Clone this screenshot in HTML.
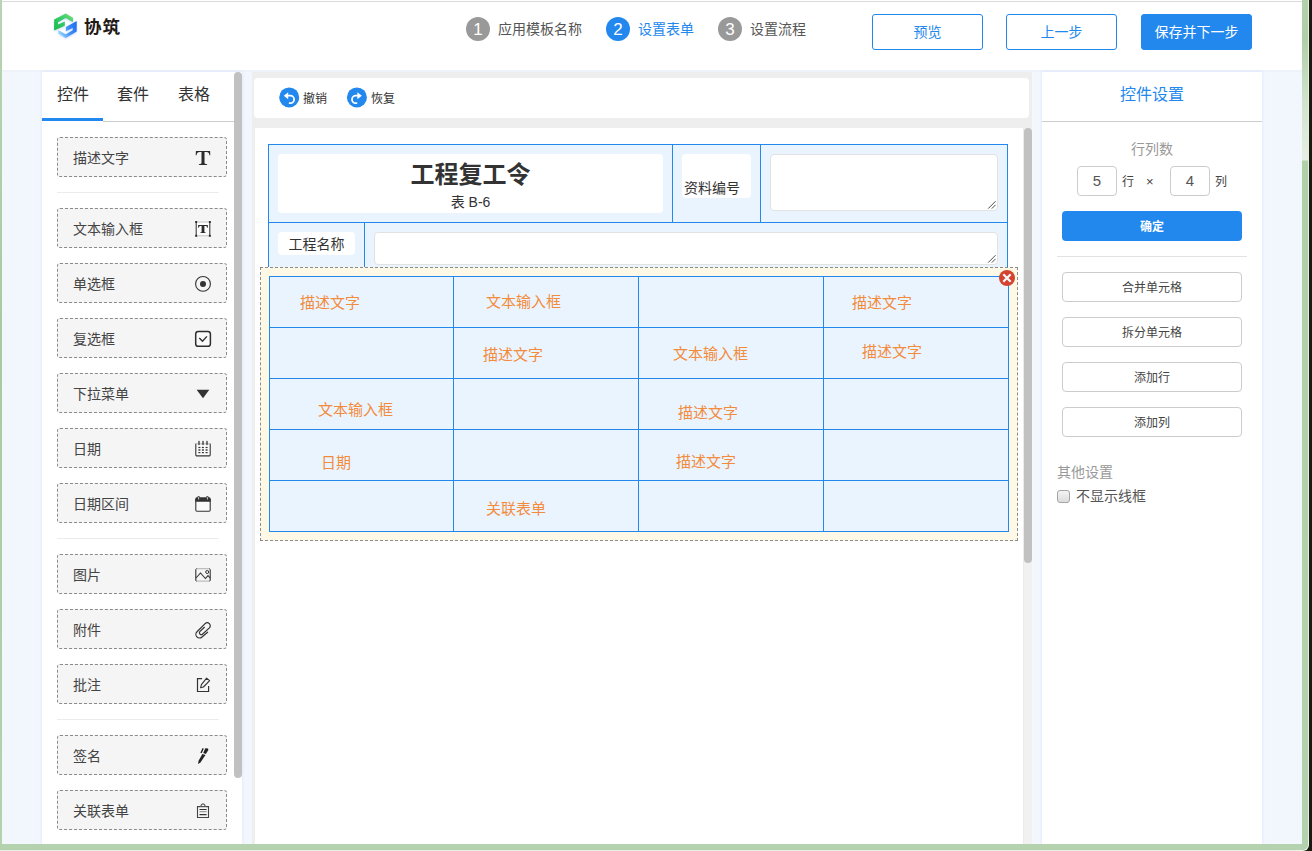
<!DOCTYPE html>
<html lang="zh-CN">
<head>
<meta charset="utf-8">
<title>设置表单</title>
<style>
*{box-sizing:border-box;margin:0;padding:0}
html,body{width:1312px;height:851px;overflow:hidden;background:#f2f6fd;}
body{position:relative;font-family:"Liberation Sans","Noto Sans CJK SC",sans-serif;font-size:14px;color:#555;}
.abs{position:absolute}
/* window frame */
#frameL{left:0;top:0;width:2px;height:851px;background:linear-gradient(#b9d4b3,#a9c9a2 40%,#b4d2ae)}
#frameB{left:0;top:844px;width:1297px;height:7px;background:linear-gradient(#b3d2ad,#b3d2ad 5.6px,#dfeadc 6.2px,#f4f7f3)}
#frameR{left:1302px;top:0;width:6px;height:839px;background:linear-gradient(#b3d0ac 0,#b0cfa9 40px,#cfe2cb 100px,#e6efe4 160px,#b0d0a9 161px,#b3d2ad 839px)}
#frameR2{left:1308px;top:0;width:1px;height:839px;background:#e6eee3}
#frameD{left:1302px;top:0;width:10px;height:851px;background:#1b1a10}
#frameCw{left:1296px;top:838px;width:13px;height:13px;background:#eef3ec;border-bottom-right-radius:6px}
#frameCg{left:1296px;top:838px;width:12px;height:12px;background:#b3d2ad;border-bottom-right-radius:5px}
#frameCi{left:1296px;top:838px;width:6px;height:6px;background:#f2f6fd}
/* header */
#hdr{left:2px;top:0;width:1300px;height:70px;background:#fff}
#hline{left:2px;top:1px;width:1300px;height:1px;background:#dadade}
#hshade{left:2px;top:70px;width:1300px;height:2px;background:#edf2fb}
.logotxt{left:84px;top:13.5px;font-size:17.5px;font-weight:bold;color:#231815;line-height:26px;letter-spacing:1px}
.stepc{width:24px;height:24px;border-radius:12px;background:#999;color:#fff;top:17px;text-align:center;font:17px/26px "Liberation Sans",sans-serif}
.stepc.on{background:#2288ee}
.stept{top:19px;line-height:20px;font-size:14px;color:#555;white-space:nowrap}
.stept.on{color:#2288ee}
.hbtn{top:14px;width:111px;height:36px;border:1px solid #2288ee;border-radius:3px;color:#2288ee;background:#fff;text-align:center;line-height:34px;font-size:14px}
.hbtn.fill{background:#2288ee;color:#fff}
/* left panel */
#lp{left:42px;top:72px;width:200px;height:772px;background:#fff;box-shadow:0 0 3px rgba(90,110,220,.14)}
#lscroll{left:234px;top:72px;width:8px;height:706px;background:#c1c1c1;border-radius:4px}
.tab{top:84px;font-size:16px;line-height:22px;color:#333;white-space:nowrap}
#tabul{left:42px;top:118px;width:61px;height:3px;background:#2288ee}
#tabline{left:103px;top:121px;width:131px;height:1px;background:#ccc}
.it{left:57px;width:170px;height:40px;border:1px dashed #8a8a8a;border-radius:3px;background:#f5f5f5}
.it>span{position:absolute;left:15px;top:10px;line-height:20px;font-size:14px;color:#444;white-space:nowrap}
.it svg{position:absolute;left:137px;top:11px;width:18px;height:18px;overflow:visible}
.sep{left:57px;width:162px;height:1px;background:#ececec}
/* center */
#cbg{left:252px;top:72px;width:780px;height:772px;background:#eee}
#tb{left:254px;top:78px;width:775px;height:40px;background:#fff;border-radius:4px}
#cv{left:255px;top:128px;width:769px;height:716px;background:#fff}
#ctrack{left:1023px;top:128px;width:9px;height:716px;background:#f1f1f1;border-left:1px solid #ebebeb}
#cthumb{left:1024px;top:128px;width:8px;height:435px;background:#c1c1c1;border-radius:4px}
.tbt{top:89px;line-height:20px;font-size:12px;color:#333;white-space:nowrap}
/* right panel */
#rp{left:1042px;top:72px;width:220px;height:772px;background:#fff;box-shadow:0 0 3px rgba(90,110,220,.14)}
</style>
</head>
<body>
<!-- header -->
<div class="abs" id="hdr"></div>
<div class="abs" id="hline"></div>
<div class="abs" id="hshade"></div>
<svg class="abs" style="left:52px;top:12px;filter:drop-shadow(0 1px 1.2px rgba(110,150,255,.35))" width="27" height="28" viewBox="0 0 27 28">
<defs>
<linearGradient id="lg1" x1="0" y1="1" x2="1" y2="0"><stop offset="0" stop-color="#14b84a"/><stop offset="0.6" stop-color="#3ccf6a"/><stop offset="1" stop-color="#7fdc78"/></linearGradient>
<linearGradient id="lg2" x1="0" y1="0.6" x2="1" y2="0.2"><stop offset="0" stop-color="#8fd3fb"/><stop offset="0.55" stop-color="#3b8cf6"/><stop offset="1" stop-color="#1f6ef2"/></linearGradient>
</defs>
<path d="M2.1 18.6 L2.1 7.6 L13.7 1.5 L21 5.8 L21 10.3 L13.7 6 L6 10.3 L6 12.5 L12.8 9.4 L12.8 13.7 Z" fill="url(#lg1)"/>
<path d="M24.7 9.1 L24.7 19.5 L13.7 25.9 L6.4 21.6 L6.4 18.3 L13.7 22.2 L20.7 18.3 L20.7 16 L13.9 19.2 L13.9 14.9 Z" fill="url(#lg2)"/>
</svg>
<div class="abs logotxt"><span class="cj">协筑</span></div>

<div class="abs stepc" style="left:466px">1</div>
<div class="abs stept" style="left:498px"><span class="cj">应用模板名称</span></div>
<div class="abs stepc on" style="left:606px">2</div>
<div class="abs stept on" style="left:638px"><span class="cj">设置表单</span></div>
<div class="abs stepc" style="left:718px">3</div>
<div class="abs stept" style="left:750px"><span class="cj">设置流程</span></div>

<div class="abs hbtn" style="left:872px"><span class="cj">预览</span></div>
<div class="abs hbtn" style="left:1006px"><span class="cj">上一步</span></div>
<div class="abs hbtn fill" style="left:1141px"><span class="cj">保存并下一步</span></div>

<!-- left panel -->
<div class="abs" id="lp"></div>
<div class="abs tab" style="left:57px"><span class="cj">控件</span></div>
<div class="abs tab" style="left:117px"><span class="cj">套件</span></div>
<div class="abs tab" style="left:178px"><span class="cj">表格</span></div>
<div class="abs" id="tabul"></div>
<div class="abs" id="tabline"></div>
<div class="abs" id="lscroll"></div>
<!--ITEMS_START-->
<div class="abs it" style="top:137px"><span><span class="cj">描述文字</span></span><svg viewBox="0 0 18 18"><path fill="#2b2b2b" d="M0.9 1.9H15.1L15.3 6.2H14.5C14.1 4 13.4 3.1 11.4 3.1H9.5V13.6C9.5 14.8 10 15.1 12.1 15.2V16H3.9V15.2C6 15.1 6.5 14.8 6.5 13.6V3.1H4.6C2.6 3.1 1.9 4 1.5 6.2H0.7Z"/></svg></div>
<div class="abs sep" style="top:192px"></div>
<div class="abs it" style="top:208px"><span><span class="cj">文本输入框</span></span><svg viewBox="0 0 18 18"><rect x="1.2" y="2" width="13.6" height="13.8" fill="#fcfcfc"/><g fill="#2b2b2b"><rect x="0.2" y="1" width="2" height="2"/><rect x="13.8" y="1" width="2" height="2"/><rect x="0.2" y="14.8" width="2" height="2"/><rect x="13.8" y="14.8" width="2" height="2"/><rect x="0.7" y="2" width="1" height="14"/><rect x="14.3" y="2" width="1" height="14"/><rect x="2" y="1.5" width="12" height="1" fill="#c4c4c4"/><rect x="2" y="15.3" width="12" height="1" fill="#c4c4c4"/><path d="M3.2 5H12.8L12.9 7.8H12.2C12 6.5 11.5 6 10.3 6H9.4V11.4C9.4 12.1 9.7 12.3 10.8 12.4V13H5.2V12.4C6.3 12.3 6.6 12.1 6.6 11.4V6H5.7C4.5 6 4 6.5 3.8 7.8H3.1Z"/></g></svg></div>
<div class="abs it" style="top:263px"><span><span class="cj">单选框</span></span><svg viewBox="0 0 18 18"><circle cx="8" cy="8.9" r="7.4" fill="none" stroke="#333" stroke-width="1.1"/><circle cx="8" cy="8.9" r="3" fill="#333"/></svg></div>
<div class="abs it" style="top:318px"><span><span class="cj">复选框</span></span><svg viewBox="0 0 18 18"><rect x="0.7" y="1.4" width="14.7" height="14.9" rx="2.6" fill="#fafafa" stroke="#2e2e2e" stroke-width="1.5"/><path d="M4.3 8L7.5 11.2L11.9 6.4" fill="none" stroke="#2e2e2e" stroke-width="1.4"/></svg></div>
<div class="abs it" style="top:373px"><span><span class="cj">下拉菜单</span></span><svg viewBox="0 0 18 18"><path d="M1.6 4.8H14.3L8 13.2Z" fill="#333"/></svg></div>
<div class="abs it" style="top:428px"><span><span class="cj">日期</span></span><svg viewBox="0 0 18 18"><path d="M0.8 3.6V14.7A1.2 1.2 0 0 0 2 15.9H14A1.2 1.2 0 0 0 15.2 14.7V3.6" fill="#fbfbfb" stroke="#333" stroke-width="1.1"/><path d="M0.8 3.8H15.2" stroke="#bdbdbd" stroke-width="1.2"/><g stroke="#333" stroke-width="1.3" stroke-linecap="round"><path d="M4 1.4V4.6M8 1.4V4.6M12 1.4V4.6"/></g><g fill="#333"><rect x="3.4" y="6.9" width="2" height="1.2"/><rect x="6.9" y="6.9" width="2" height="1.2"/><rect x="10.6" y="6.9" width="2" height="1.2"/><rect x="3.4" y="9.3" width="2" height="1.4"/><rect x="6.9" y="9.3" width="2" height="1.4"/><rect x="10.6" y="9.3" width="2" height="1.4"/><rect x="3.4" y="12" width="2" height="1.2"/><rect x="6.9" y="12" width="2" height="1.2"/><rect x="10.6" y="12" width="2" height="1.2"/></g></svg></div>
<div class="abs it" style="top:483px"><span><span class="cj">日期区间</span></span><svg viewBox="0 0 18 18"><path d="M0.8 4V15A1.2 1.2 0 0 0 2 16.2H14A1.2 1.2 0 0 0 15.2 15V4" fill="#fbfbfb" stroke="#333" stroke-width="1.1"/><path d="M0.3 6.8V3.8A1.6 1.6 0 0 1 1.9 2.2H14.1A1.6 1.6 0 0 1 15.7 3.8V6.8Z" fill="#333"/><g stroke="#333" stroke-width="2.4" stroke-linecap="round"><path d="M3.6 2.3V4M12.4 2.3V4"/></g><g stroke="#e8e8e8" stroke-width="0.8" stroke-linecap="round"><path d="M3.6 2.2V4.2M12.4 2.2V4.2"/></g></svg></div>
<div class="abs sep" style="top:538px"></div>
<div class="abs it" style="top:554px"><span><span class="cj">图片</span></span><svg viewBox="0 0 18 18"><path d="M0.8 3.4V14.4M15.2 3.4V14.4" stroke="#333" stroke-width="1.1" fill="none"/><path d="M1.6 2.7H14.4M1.6 15.1H14.4" stroke="#bdbdbd" stroke-width="1.2" stroke-linecap="round"/><path d="M0.8 3.6Q0.8 2.7 1.7 2.7M15.2 3.6Q15.2 2.7 14.3 2.7M0.8 14.2Q0.8 15.1 1.7 15.1M15.2 14.2Q15.2 15.1 14.3 15.1" fill="none" stroke="#555" stroke-width="1"/><path d="M1 12L5.5 7L10.4 12.5L13 9.6L15.2 12" fill="none" stroke="#333" stroke-width="1.1"/><circle cx="12.2" cy="6" r="1.5" fill="none" stroke="#333" stroke-width="1"/></svg></div>
<div class="abs it" style="top:609px"><span><span class="cj">附件</span></span><svg viewBox="0 0 18 18"><path d="M12.6 11.2L7 16A3.6 3.6 0 0 1 2 10.8L10.1 2.7A3 3 0 0 1 14.4 6.9L7.4 13.3A1.9 1.9 0 0 1 4.8 10.6L9.4 6.3" fill="none" stroke="#333" stroke-width="1.2" stroke-linecap="round"/></svg></div>
<div class="abs it" style="top:664px"><span><span class="cj">批注</span></span><svg viewBox="0 0 18 18"><path d="M7.1 2.6H2.5V15.5H13.6V10" fill="none" stroke="#333" stroke-width="1.2"/><path d="M11.6 2.2L14.6 4.6L8.4 11L5.6 11.8L6.4 8.6Z" fill="none" stroke="#333" stroke-width="1.1" stroke-linejoin="round"/></svg></div>
<div class="abs sep" style="top:719px"></div>
<div class="abs it" style="top:735px"><span><span class="cj">签名</span></span><svg viewBox="0 0 18 18"><path d="M3 17L3.6 13.7L7.4 7L10.5 8L5.4 15.6Z" fill="#222"/><path d="M8.2 6.1L10.3 1.3L13 1.5L13.4 3.1L10.9 7Z" fill="#222"/><path d="M6 6L8.2 1.4" stroke="#222" stroke-width="1.4" fill="none"/></svg></div>
<div class="abs it" style="top:790px"><span><span class="cj">关联表单</span></span><svg viewBox="0 0 18 18"><path d="M5.6 4.6H2.5V15.5H13.5V4.6H10.4" fill="none" stroke="#444" stroke-width="1.1"/><path d="M5.9 4.7V4A2.1 2.1 0 0 1 10.1 4V4.7Z" fill="none" stroke="#333" stroke-width="1"/><path d="M4.5 7.5H11.6M4.5 12.6H11.6" stroke="#333" stroke-width="1.1"/><path d="M4.5 9.7H11.6" stroke="#888" stroke-width="1"/></svg></div>
<!--ITEMS_END-->

<!-- center -->
<div class="abs" id="cbg"></div>
<div class="abs" id="tb"></div>
<div class="abs" id="cv"></div>
<div class="abs" id="ctrack"></div>
<div class="abs" id="cthumb"></div>
<!--TOOLBAR_START-->
<svg class="abs" style="left:279px;top:87px" width="21" height="21" viewBox="0 0 21 21"><circle cx="10.2" cy="10.4" r="10" fill="#2288ee"/><path d="M4.8 8.7L9.2 5.2V12.2Z" fill="#fff"/><path d="M8.8 8.7H11.4A3.7 3.7 0 0 1 11.4 16.1H10.6" fill="none" stroke="#fff" stroke-width="1.8" stroke-linecap="round"/></svg>
<div class="abs tbt" style="left:303px"><span class="cj">撤销</span></div>
<svg class="abs" style="left:346px;top:87px" width="22" height="21" viewBox="0 0 22 21"><circle cx="10.9" cy="10.4" r="10" fill="#2288ee"/><path d="M15.8 8.7L11.4 5.2V12.2Z" fill="#fff"/><path d="M11.8 8.7H9.7A3.7 3.7 0 0 0 9.7 16.1H10.5" fill="none" stroke="#fff" stroke-width="1.8" stroke-linecap="round"/></svg>
<div class="abs tbt" style="left:371px"><span class="cj">恢复</span></div>
<!--TOOLBAR_END-->
<!--FORM_START-->
<style>
.cell{position:absolute;background:#eaf4fe;border:1px solid #2288ee}
.wb{position:absolute;background:#fff;border-radius:4px}
.ta{position:absolute;background:#fff;border:1px solid #e2e2e2;border-radius:4px}
.rs{position:absolute;right:1px;bottom:1px;width:10px;height:10px}
.ot{position:absolute;color:#f38b3c;font-size:15px;line-height:20px;white-space:nowrap}
</style>
<!-- upper form table -->
<div class="cell" style="left:268px;top:144px;width:405px;height:79px"></div>
<div class="cell" style="left:672px;top:144px;width:89px;height:79px"></div>
<div class="cell" style="left:760px;top:144px;width:248px;height:79px"></div>
<div class="cell" style="left:268px;top:222px;width:97px;height:50px"></div>
<div class="cell" style="left:364px;top:222px;width:644px;height:50px"></div>
<div class="wb" style="left:278px;top:154px;width:385px;height:59px"></div>
<div class="abs" style="left:278px;top:158px;width:385px;text-align:center;font-size:24px;font-weight:bold;color:#333;line-height:34px;white-space:nowrap"><span class="cj">工程复工令</span></div>
<div class="abs" style="left:278px;top:192px;width:385px;text-align:center;font-size:14px;color:#333;line-height:20px;white-space:nowrap"><span class="cj" style="display:inline-block;width:1em">表</span> B-6</div>
<div class="wb" style="left:682px;top:154px;width:69px;height:44px"></div>
<div class="abs" style="left:684px;top:178px;font-size:14px;color:#333;line-height:20px;white-space:nowrap"><span class="cj">资料编号</span></div>
<div class="ta" style="left:770px;top:154px;width:228px;height:57px"><svg class="rs" viewBox="0 0 10 10"><path d="M2.2 9.6L9.6 2.2M5.8 9.6L9.6 5.8" stroke="#3a3a3a" stroke-width="0.9" fill="none"/></svg></div>
<div class="wb" style="left:278px;top:232px;width:77px;height:23px"></div>
<div class="abs" style="left:278px;top:234px;width:77px;text-align:center;font-size:14px;color:#333;line-height:20px;white-space:nowrap"><span class="cj">工程名称</span></div>
<div class="ta" style="left:374px;top:232px;width:624px;height:33px"><svg class="rs" viewBox="0 0 10 10"><path d="M2.2 9.6L9.6 2.2M5.8 9.6L9.6 5.8" stroke="#3a3a3a" stroke-width="0.9" fill="none"/></svg></div>
<!-- selected table overlay -->
<div class="abs" style="left:260px;top:267px;width:758px;height:274px;background:#fef9e7;border:1px dashed #8c8c8c"></div>
<div class="abs" style="left:269px;top:276px;width:740px;height:256px;background:#eaf4fe;border:1px solid #2288ee"></div>
<div class="abs" style="left:269px;top:327px;width:740px;height:1px;background:#2288ee"></div>
<div class="abs" style="left:269px;top:378px;width:740px;height:1px;background:#2288ee"></div>
<div class="abs" style="left:269px;top:429px;width:740px;height:1px;background:#2288ee"></div>
<div class="abs" style="left:269px;top:480px;width:740px;height:1px;background:#2288ee"></div>
<div class="abs" style="left:453px;top:276px;width:1px;height:256px;background:#2288ee"></div>
<div class="abs" style="left:638px;top:276px;width:1px;height:256px;background:#2288ee"></div>
<div class="abs" style="left:823px;top:276px;width:1px;height:256px;background:#2288ee"></div>
<div class="ot" style="left:300px;top:293px"><span class="cj">描述文字</span></div>
<div class="ot" style="left:486px;top:292px"><span class="cj">文本输入框</span></div>
<div class="ot" style="left:852px;top:293px"><span class="cj">描述文字</span></div>
<div class="ot" style="left:483px;top:345px"><span class="cj">描述文字</span></div>
<div class="ot" style="left:673px;top:344px"><span class="cj">文本输入框</span></div>
<div class="ot" style="left:862px;top:342px"><span class="cj">描述文字</span></div>
<div class="ot" style="left:318px;top:400px"><span class="cj">文本输入框</span></div>
<div class="ot" style="left:678px;top:403px"><span class="cj">描述文字</span></div>
<div class="ot" style="left:321px;top:453px"><span class="cj">日期</span></div>
<div class="ot" style="left:676px;top:452px"><span class="cj">描述文字</span></div>
<div class="ot" style="left:486px;top:499px"><span class="cj">关联表单</span></div>
<svg class="abs" style="left:999px;top:270px" width="16" height="16" viewBox="0 0 16 16"><circle cx="8" cy="8" r="8" fill="#d5432e"/><path d="M4.3 4.3L11.7 11.7M11.7 4.3L4.3 11.7" stroke="#f4f8fd" stroke-width="2.2" stroke-linecap="butt"/></svg>
<!--FORM_END-->

<!-- right panel -->
<div class="abs" id="rp"></div>
<!--RIGHT_START-->
<style>
.rbtn{position:absolute;left:1062px;width:180px;height:30px;border:1px solid #ccc;border-radius:4px;background:#fff;text-align:center;font-size:12px;line-height:30px;color:#444;white-space:nowrap}
.rin{position:absolute;top:166px;width:40px;height:30px;border:1px solid #ccc;border-radius:4px;background:#fff;text-align:center;font-size:15px;line-height:28px;color:#555}
.rtx{position:absolute;top:172px;font-size:12px;line-height:20px;color:#444;white-space:nowrap}
</style>
<div class="abs" style="left:1042px;top:84px;width:220px;text-align:center;font-size:16px;line-height:22px;color:#2288ee;white-space:nowrap"><span class="cj">控件设置</span></div>
<div class="abs" style="left:1042px;top:121px;width:220px;height:1px;background:#ccc"></div>
<div class="abs" style="left:1042px;top:139px;width:220px;text-align:center;font-size:14px;line-height:20px;color:#999;white-space:nowrap"><span class="cj">行列数</span></div>
<div class="rin" style="left:1077px">5</div>
<div class="rtx" style="left:1122px"><span class="cj">行</span></div>
<div class="rtx" style="left:1146px;font-size:13px">×</div>
<div class="rin" style="left:1170px">4</div>
<div class="rtx" style="left:1215px"><span class="cj">列</span></div>
<div class="abs" style="left:1062px;top:211px;width:180px;height:30px;border-radius:4px;background:#2288ee;color:#fff;font-weight:bold;font-size:12px;line-height:32px;text-align:center;white-space:nowrap"><span class="cj">确定</span></div>
<div class="abs" style="left:1057px;top:256px;width:190px;height:1px;background:#e2e2e2"></div>
<div class="rbtn" style="top:272px"><span class="cj">合并单元格</span></div>
<div class="rbtn" style="top:317px"><span class="cj">拆分单元格</span></div>
<div class="rbtn" style="top:362px"><span class="cj">添加行</span></div>
<div class="rbtn" style="top:407px"><span class="cj">添加列</span></div>
<div class="abs" style="left:1057px;top:462px;font-size:14px;line-height:20px;color:#999;white-space:nowrap"><span class="cj">其他设置</span></div>
<div class="abs" style="left:1057px;top:490px;width:13px;height:13px;border:1px solid #a5a5a5;border-radius:3px;background:linear-gradient(#f4f4f4,#dcdcdc)"></div>
<div class="abs" style="left:1076px;top:486px;font-size:14px;line-height:20px;color:#555;white-space:nowrap"><span class="cj">不显示线框</span></div>
<!--RIGHT_END-->

<!-- window frame -->
<div class="abs" id="frameD"></div>
<div class="abs" id="frameL"></div>
<div class="abs" id="frameR"></div>
<div class="abs" id="frameR2"></div>
<div class="abs" id="frameB"></div>
<div class="abs" id="frameCw"></div>
<div class="abs" id="frameCg"></div>
<div class="abs" id="frameCi"></div>
</body>
</html>
